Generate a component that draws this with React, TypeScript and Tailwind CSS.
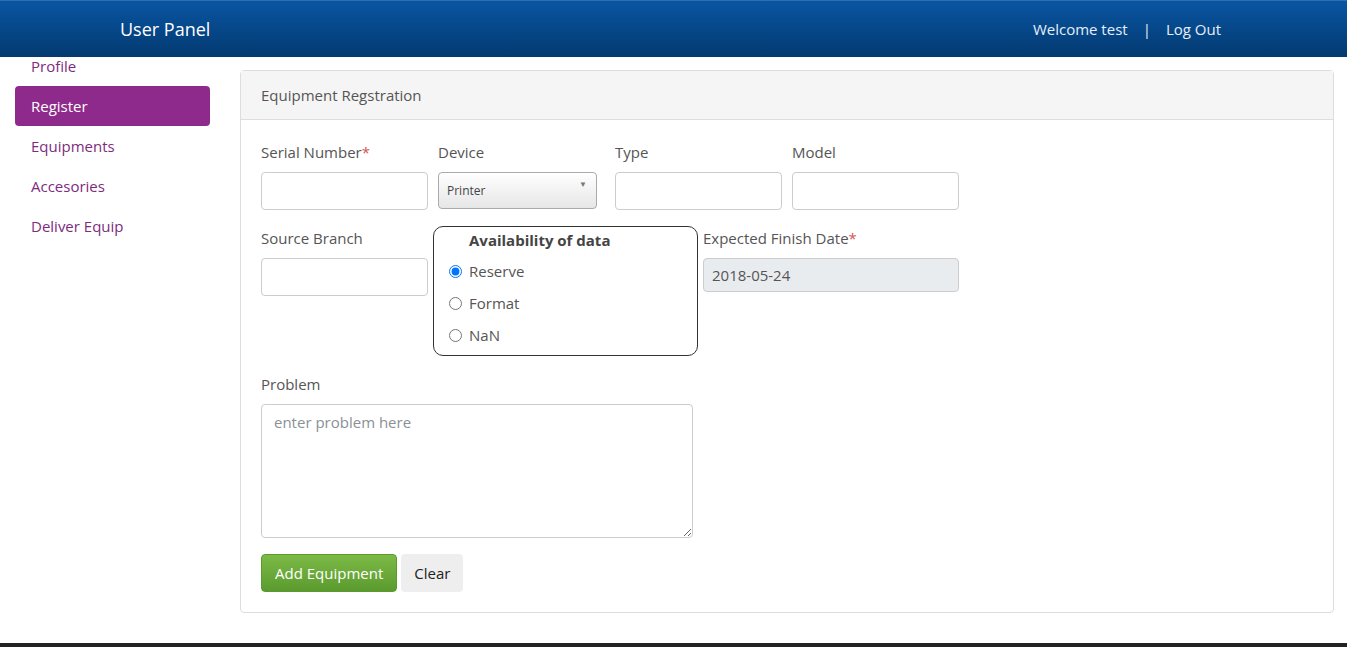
import { ChangeEvent, useState } from "react";

const navItems = ["Profile", "Register", "Equipments", "Accesories", "Deliver Equip"];

function Field({
  label,
  required,
  children,
  className = "",
}: {
  label: string;
  required?: boolean;
  children: React.ReactNode;
  className?: string;
}) {
  return (
    <div className={`flex flex-col ${className}`}>
      <label className="h-5 text-[15px] leading-5 text-[#555]">
        {label}
        {required && <span className="text-[#d9534f]">*</span>}
      </label>
      <div className="mt-[10px]">{children}</div>
    </div>
  );
}

const inputCls =
  "block h-[38px] w-[167px] rounded-[4px] border border-[#ccc] bg-white px-3 text-[15px] text-[#555] outline-none";

export default function App() {
  const [avail, setAvail] = useState("Reserve");
  const [device, setDevice] = useState("Printer");
  const [problem, setProblem] = useState("");

  return (
    <div
      className="flex min-h-[647px] flex-col bg-white"
      style={{ fontFamily: '"Open Sans", "Noto Sans", sans-serif' }}
    >
      <header className="relative z-10 flex h-[57px] items-center border-t border-[#2f6fb0] bg-gradient-to-b from-[#0a55a3] to-[#033a70] pl-[120px] pr-[126px]">
        <span className="text-[18px] text-white">User Panel</span>
        <div className="ml-auto flex items-center text-[15px] text-[#e6eef7]">
          <span>Welcome test</span>
          <span className="mx-[15px]">|</span>
          <a href="#">Log Out</a>
        </div>
      </header>

      <div className="flex flex-1">
        <nav className="-mt-[11px] ml-[15px] w-[195px] shrink-0">
          {navItems.map((item) => (
            <a
              key={item}
              href="#"
              className={`flex h-10 items-center rounded-[4px] px-4 text-[15px] ${
                item === "Register" ? "bg-[#8e2a8c] text-white" : "text-[#7d2c7d]"
              }`}
            >
              {item}
            </a>
          ))}
        </nav>

        <main className="ml-[30px] mr-[13px] mt-[13px] flex-1">
          <div className="rounded-[4px] border border-[#ddd]">
            <div className="flex h-[49px] items-center border-b border-[#ddd] bg-[#f5f5f5] px-5 text-[15px] text-[#555]">
              Equipment Regstration
            </div>

            <div className="px-5 pb-5 pt-[22px]">
              <div className="flex">
                <Field label="Serial Number" required>
                  <input className={inputCls} />
                </Field>
                <Field label="Device" className="ml-[10px]">
                  <div className="relative">
                    <select
                      value={device}
                      onChange={(e: ChangeEvent<HTMLSelectElement>) => setDevice(e.target.value)}
                      className="block h-[37px] w-[159px] appearance-none rounded-[4px] border border-[#aaa] bg-gradient-to-b from-white to-[#e6e6e6] pl-2 text-[12px] text-[#444] outline-none"
                    >
                      <option>Printer</option>
                      <option>Scanner</option>
                      <option>Laptop</option>
                    </select>
                    <span className="pointer-events-none absolute right-[10px] top-[6px] text-[8px] text-[#777]">▼</span>
                  </div>
                </Field>
                <Field label="Type" className="ml-[18px]">
                  <input className={inputCls} />
                </Field>
                <Field label="Model" className="ml-[10px]">
                  <input className={inputCls} />
                </Field>
              </div>

              <div className="mt-4 flex">
                <Field label="Source Branch" className="pt-[2px]">
                  <input className={inputCls} />
                </Field>
                <fieldset className="ml-[5px] h-[130px] w-[265px] rounded-[10px] border border-[#333] pl-[15px] pt-[3px]">
                  <div className="pl-[20px] text-[15px] font-bold leading-5 text-[#444]">Availability of data</div>
                  {["Reserve", "Format", "NaN"].map((opt, i) => (
                    <label
                      key={opt}
                      className={`flex h-5 items-center text-[15px] text-[#555] ${i === 0 ? "mt-[11px]" : "mt-[12px]"}`}
                    >
                      <input
                        type="radio"
                        name="avail"
                        checked={avail === opt}
                        onChange={() => setAvail(opt)}
                        className="m-0 h-[13px] w-[13px]"
                      />
                      <span className="ml-[7px]">{opt}</span>
                    </label>
                  ))}
                </fieldset>
                <Field label="Expected Finish Date" required className="ml-[5px] pt-[2px]">
                  <input
                    readOnly
                    value="2018-05-24"
                    className="block h-[34px] w-[256px] rounded-[4px] border border-[#ccc] bg-[#e9ecef] px-2 text-[15px] text-[#555] outline-none"
                  />
                </Field>
              </div>

              <div className="mt-[18px]">
                <Field label="Problem">
                  <textarea
                    value={problem}
                    onChange={(e: ChangeEvent<HTMLTextAreaElement>) => setProblem(e.target.value)}
                    placeholder="enter problem here"
                    className="block h-[134px] w-[432px] rounded-[4px] border border-[#ccc] px-3 py-[6px] text-[15px] text-[#555] outline-none placeholder:text-[#8a9096]"
                  />
                </Field>
              </div>

              <div className="mt-4 flex gap-1">
                <button className="h-[38px] rounded-[4px] border border-[#5a9a2f] bg-gradient-to-b from-[#7cba46] to-[#5b9a2e] px-[13px] text-[15px] text-white">
                  Add Equipment
                </button>
                <button
                  onClick={() => setProblem("")}
                  className="h-[38px] rounded-[4px] bg-[#eee] px-[13px] text-[15px] text-[#222]"
                >
                  Clear
                </button>
              </div>
            </div>
          </div>
        </main>
      </div>

      <footer className="h-[4px] bg-[#222]" />
    </div>
  );
}
